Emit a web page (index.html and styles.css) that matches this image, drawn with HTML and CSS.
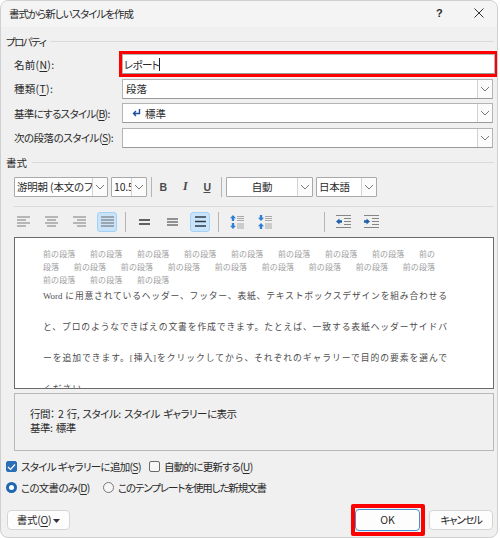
FILE: index.html
```html
<!DOCTYPE html>
<html lang="ja">
<head>
<meta charset="utf-8">
<title>書式から新しいスタイルを作成</title>
<link rel="stylesheet" href="styles.css">
</head>
<body>
<svg class="defs" width="0" height="0" aria-hidden="true">
  <symbol id="chev" viewBox="0 0 10 6"><path d="M1 1l4 4 4-4" fill="none" stroke="#7a7a7a" stroke-width="1"/></symbol>
</svg>
<main class="dialog">
  <header class="titlebar">
    <span class="title">書式から新しいスタイルを作成</span>
    <span class="help">?</span>
    <svg class="close" width="10" height="10" viewBox="0 0 10 10"><path d="M.5.5l9 9M9.5.5l-9 9" stroke="#333" stroke-width="1" fill="none"/></svg>
  </header>
  <div class="content">
    <div class="group-head first"><span>プロパティ</span><i></i></div>
    <div class="form">
      <div class="row"><label class="short">名前(<u>N</u>):</label><div class="field name-field"><span>レポート</span><b class="caret"></b></div></div>
      <div class="row"><label class="short">種類(<u>T</u>):</label><div class="field"><span>段落</span><span class="arrow"><svg width="10" height="6"><use href="#chev"/></svg></span></div></div>
      <div class="row"><label>基準にするスタイル(<u>B</u>):</label><div class="field"><span class="base"><svg class="return" width="9" height="8" viewBox="0 0 9 8"><path d="M7.5 0v4.5H2M4 2L1.5 4.5 4 7" fill="none" stroke="#1f4e9e" stroke-width="1.4"/></svg>標準</span><span class="arrow"><svg width="10" height="6"><use href="#chev"/></svg></span></div></div>
      <div class="row"><label class="mid">次の段落のスタイル(<u>S</u>):</label><div class="field"><span></span><span class="arrow"><svg width="10" height="6"><use href="#chev"/></svg></span></div></div>
    </div>
    <div class="group-head second"><span>書式</span><i></i></div>
    <div class="toolbar-one">
      <div class="combo font-combo"><span class="combo-text">游明朝 (本文のフォント)</span><span class="arrow"><svg width="10" height="6"><use href="#chev"/></svg></span></div>
      <div class="combo size-combo"><span class="combo-text">10.5</span><span class="arrow"><svg width="10" height="6"><use href="#chev"/></svg></span></div>
      <i class="sep tall"></i>
      <span class="fmt bold">B</span>
      <span class="fmt italic">I</span>
      <span class="fmt under">U</span>
      <i class="sep tall"></i>
      <div class="combo color-combo"><span class="combo-text centered">自動</span><span class="arrow"><svg width="10" height="6"><use href="#chev"/></svg></span></div>
      <div class="combo lang-combo"><span class="combo-text">日本語</span><span class="arrow"><svg width="10" height="6"><use href="#chev"/></svg></span></div>
    </div>
    <div class="rule"></div>
    <div class="toolbar-two">
      <span class="tool"><svg width="13" height="11" viewBox="0 0 13 11"><path d="M0 1h13M0 4h9M0 7h13M0 10h9" stroke="#7c7c7c"/></svg></span>
      <span class="tool"><svg width="13" height="11" viewBox="0 0 13 11"><path d="M0 1h13M2 4h9M0 7h13M2 10h9" stroke="#7c7c7c"/></svg></span>
      <span class="tool"><svg width="13" height="11" viewBox="0 0 13 11"><path d="M0 1h13M4 4h9M0 7h13M4 10h9" stroke="#7c7c7c"/></svg></span>
      <span class="tool on"><svg width="13" height="11" viewBox="0 0 13 11"><path d="M0 1h13M0 4h13M0 7h13M0 10h13" stroke="#6a6a6a"/></svg></span>
      <i class="sep"></i>
      <span class="tool"><svg width="11" height="6" viewBox="0 0 11 6"><path d="M0 1h11M0 5h11" stroke="#333" stroke-width="1.6"/></svg></span>
      <span class="tool"><svg width="11" height="8" viewBox="0 0 11 8"><path d="M0 1h11M0 4h11M0 7h11" stroke="#333" stroke-width="1.2"/></svg></span>
      <span class="tool on"><svg width="11" height="11" viewBox="0 0 11 11"><path d="M0 1h11M0 5.500h11M0 10h11" stroke="#2f3b45" stroke-width="1.3"/></svg></span>
      <i class="sep"></i>
      <span class="tool"><svg width="14" height="14" viewBox="0 0 14 14"><path d="M3 0L6 3.200H4.200V6H1.800V3.200H0zM3 14L6 10.800H4.200V8H1.800V10.800H0z" fill="#2f7fd0"/><path d="M7 1.500h7M7 3.500h7M7 5.500h7M7 9h7M7 11h7M7 13h7" stroke="#a8a8a8"/></svg></span>
      <span class="tool"><svg width="14" height="14" viewBox="0 0 14 14"><path d="M3 6L6 2.800H4.200V0H1.800V2.800H0zM3 8L6 11.200H4.200V14H1.800V11.200H0z" fill="#2f7fd0"/><path d="M7 1.500h7M7 3.500h7M7 5.500h7M7 9h7M7 11h7M7 13h7" stroke="#a8a8a8"/></svg></span>
      <i class="sep wide"></i>
      <span class="tool"><svg width="15" height="13" viewBox="0 0 15 13"><path d="M0 6.500L3.500 3.500V5.300H6V7.700H3.500V9.500z" fill="#1f5fa8"/><path d="M0 .5h15M8 3.500h7M8 6.500h7M8 9.500h7M0 12.500h15" stroke="#858585"/></svg></span>
      <span class="tool"><svg width="15" height="13" viewBox="0 0 15 13"><path d="M6 6.500L2.500 3.500V5.300H0V7.700H2.500V9.500z" fill="#1f5fa8"/><path d="M0 .5h15M8 3.500h7M8 6.500h7M8 9.500h7M0 12.500h15" stroke="#858585"/></svg></span>
    </div>
    <section class="preview">
      <div class="prev">
        <p>前の段落 前の段落 前の段落 前の段落 前の段落 前の段落 前の段落 前の段落 前の</p>
        <p>段落 前の段落 前の段落 前の段落 前の段落 前の段落 前の段落 前の段落 前の段落</p>
        <p>前の段落 前の段落 前の段落</p>
      </div>
      <div class="sample">
        <p>Word に用意されているヘッダー、フッター、表紙、テキストボックスデザインを組み合わせる</p>
        <p>と、プロのようなできばえの文書を作成できます。たとえば、一致する表紙ヘッダーサイドバ</p>
        <p>ーを追加できます。[挿入]をクリックしてから、それぞれのギャラリーで目的の要素を選んで</p>
        <p class="cut">ください。</p>
      </div>
    </section>
    <section class="desc">
      <p>行間： 2 行, スタイル: スタイル ギャラリーに表示</p>
      <p>基準: 標準</p>
    </section>
    <div class="opts">
      <span class="check on"><svg width="9" height="8" viewBox="0 0 9 8"><path d="M1 4l2.500 2.500L8 1.500" fill="none" stroke="#fff" stroke-width="1.200"/></svg></span>
      <span class="opt gallery">スタイル ギャラリーに追加(<u>S</u>)</span>
      <span class="check"></span>
      <span class="opt">自動的に更新する(<u>U</u>)</span>
    </div>
    <div class="opts radios">
      <span class="radio on"></span>
      <span class="opt doc">この文書のみ(<u>D</u>)</span>
      <span class="radio"></span>
      <span class="opt template">このテンプレートを使用した新規文書</span>
    </div>
    <div class="actions">
      <button class="btn format" type="button">書式(<u>O</u>) <svg width="7" height="4" viewBox="0 0 7 4"><path d="M0 0h7L3.500 4z" fill="#333"/></svg></button>
      <span class="ok-mark"><button class="btn ok" type="button">OK</button></span>
      <button class="btn cancel" type="button">キャンセル</button>
    </div>
  </div>
</main>
</body>
</html>
```

FILE: styles.css
```css
* { box-sizing: border-box; }
html, body { margin: 0; padding: 0; background: #fff; }
body { width: 500px; height: 538px; overflow: hidden; font-family: "Noto Sans CJK JP", "Liberation Sans", sans-serif; font-size: 10.5px; letter-spacing: -.7px; color: #2a2a2a; font-feature-settings: "palt"; }
p { margin: 0; }
i { display: block; }
u { text-decoration-thickness: 1px; text-underline-offset: 1.5px; }
.defs { position: absolute; }
.dialog { width: 498px; height: 538px; background: #f0f0f0; border: 1px solid #cfcfcf; border-radius: 8px; overflow: hidden; display: flex; flex-direction: column; }
.titlebar { height: 26px; flex: none; background: #f4f4f4; display: flex; align-items: center; padding: 0 0 2px 8px; }
.title { flex: 1; letter-spacing: -1px; }
.help { font-family: "Liberation Sans", sans-serif; font-weight: 700; font-size: 11px; margin-right: 32px; }
.close { margin-right: 13px; }
.content { flex: 1; padding: 7px 3px 0 5px; display: flex; flex-direction: column; }
.group-head { height: 14px; display: flex; align-items: center; gap: 5px; flex: none; }
.group-head i { flex: 1; height: 1px; background: #d9d9d9; }
.first span { letter-spacing: -1.5px; }
.second { margin-top: 8px; }
.second span { letter-spacing: 0; }
.form { margin: 6px 0 0 8px; display: flex; flex-direction: column; gap: 4.5px; }
.row { display: flex; height: 20px; align-items: center; }
.row label { width: 108px; flex: none; }
.row .short { letter-spacing: .3px; }
.row .mid { letter-spacing: -.5px; }
.field { flex: 1; height: 20px; background: #fff; border: 1px solid #b4b4b4; border-bottom-color: #9a9a9a; display: flex; align-items: center; justify-content: space-between; padding-left: 3px; margin-right: 1px; letter-spacing: 0; }
.name-field { justify-content: flex-start; outline: 3px solid #f00; margin-right: -1px; padding-left: 1px; letter-spacing: -.7px; }
.caret { width: 1px; height: 13px; background: #222; }
.arrow { width: 15px; height: 18px; flex: none; background: #fbfbfb; border-left: 1px solid #d2d2d2; display: flex; align-items: center; justify-content: center; }
.arrow svg { display: block; }
.base { display: flex; align-items: center; gap: 4px; padding-left: 6px; }
.toolbar-one { display: flex; align-items: center; height: 20px; margin: 7px 0 0 8px; flex: none; }
.combo { height: 20px; background: #fff; border: 1px solid #a9a9a9; display: flex; align-items: center; overflow: hidden; flex: none; border-radius: 1px; }
.combo-text { flex: 1; min-width: 0; white-space: nowrap; overflow: hidden; padding-left: 2px; letter-spacing: -.2px; }
.centered { text-align: center; padding-left: 0; }
.font-combo { width: 94px; }
.size-combo { width: 36px; margin-left: 3px; }
.sep { width: 1px; background: #b5b5b5; height: 20px; flex: none; }
.tall { margin-left: 4px; }
.fmt { width: 22px; text-align: center; font-family: "Liberation Sans", sans-serif; font-size: 10.5px; color: #4a4a4a; font-weight: 700; }
.italic { font-family: "Liberation Serif", serif; font-style: italic; font-size: 12px; }
.under { text-decoration: underline; }
.fmt + .sep { margin-left: 3px; margin-right: 4px; }
.lang-combo { width: 61px; margin-left: 3px; }
.color-combo { width: 87px; }
.rule { height: 1px; background: #d9d9d9; margin: 9px 0 0 8px; flex: none; }
.toolbar-two { display: flex; align-items: center; height: 20px; margin: 5px 0 0 7px; gap: 8px; flex: none; }
.tool { width: 20px; height: 20px; display: flex; align-items: center; justify-content: center; border-radius: 3px; flex: none; border: 1px solid transparent; }
.tool.on { background: #c9e3fb; border-color: #a4d2f7; }
.toolbar-two .wide { margin-left: 41px; }
.preview { height: 152px; margin: 5px 0 0 8px; background: #fff; border: 1px solid #6b6b6b; padding: 9px 0 0 28px; overflow: hidden; flex: none; }
.prev { font-size: 8px; line-height: 13px; color: #a0a0a0; letter-spacing: .1px; word-spacing: 12.700px; white-space: nowrap; font-feature-settings: normal; }
.sample { width: 404px; margin-top: 3px; font-family: "Liberation Serif", "Noto Sans CJK JP", serif; font-size: 8.800px; color: #4c4c4c; letter-spacing: 0; font-feature-settings: normal; }
.sample p { text-align: justify; text-align-last: justify; white-space: nowrap; height: 31px; line-height: 14px; }
.sample .cut { text-align-last: left; letter-spacing: 1px; }
.desc { height: 58px; margin: 4px 0 0 8px; border: 1px solid #b9b9b9; padding: 13px 0 0 15px; line-height: 14px; flex: none; letter-spacing: -.5px; word-spacing: 1.500px; }
.opts { display: flex; align-items: center; height: 14px; margin: 9px 0 0 0; flex: none; white-space: nowrap; }
.radios { margin-top: 7px; }
.check { width: 11px; height: 11px; border: 1px solid #6a6a6a; border-radius: 2px; display: flex; align-items: center; justify-content: center; background: #f6f6f6; flex: none; margin-right: 4px; }
.check.on { background: #2a6fb8; border-color: #2a6fb8; }
.radio { width: 11px; height: 11px; border-radius: 50%; border: 1px solid #777; background: #f6f6f6; flex: none; margin-right: 4px; }
.radio.on { border: 3px solid #1f67b1; background: #fff; }
.gallery { width: 128px; }
.doc { width: 82px; }
.template { letter-spacing: -1.100px; }
.actions { display: flex; align-items: center; margin-top: 9px; padding-left: 1px; flex: none; height: 32px; }
.btn { font: inherit; letter-spacing: -.3px; font-feature-settings: "palt"; color: #2a2a2a; height: 20px; background: #fdfdfd; border: 1px solid #d5d5d5; border-radius: 4px; padding: 0; }
.format { width: 63px; }
.format svg { vertical-align: 1px; }
.ok-mark { display: flex; margin-left: 281px; padding: 1px 1px 1px 0; border: 4px solid #f00; border-radius: 2px; background: #f0f0f0; }
.ok { width: 65px; height: 22px; border-color: #3f8fd2; letter-spacing: 0; }
.cancel { width: 64px; margin-left: 4px; letter-spacing: -1.300px; }
```
